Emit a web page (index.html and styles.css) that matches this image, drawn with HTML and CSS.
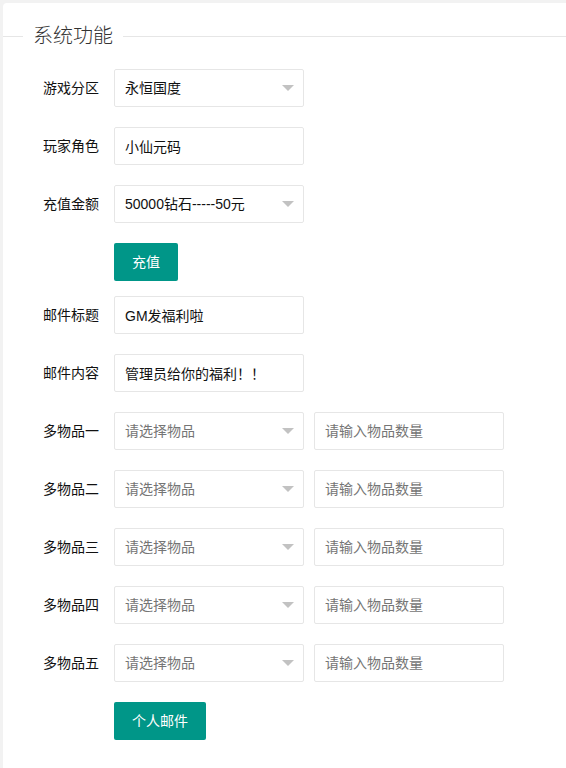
FILE: index.html
```html
<!DOCTYPE html>
<html lang="zh-CN">
<head>
<meta charset="utf-8">
<title>系统功能</title>
<link rel="stylesheet" href="styles.css">
</head>
<body>
<div class="card">
  <fieldset class="field-title">
    <legend>系统功能</legend>
  </fieldset>
  <form class="form">
    <div class="form-item">
      <label class="form-label">游戏分区</label>
      <div class="input-inline select">
        <div class="input">永恒国度</div>
        <i class="edge"></i>
      </div>
    </div>
    <div class="form-item">
      <label class="form-label">玩家角色</label>
      <div class="input-inline">
        <input class="input" type="text" value="小仙元码">
      </div>
    </div>
    <div class="form-item">
      <label class="form-label">充值金额</label>
      <div class="input-inline select">
        <div class="input">50000钻石-----50元</div>
        <i class="edge"></i>
      </div>
    </div>
    <div class="form-item btn-row">
      <div class="form-label"></div>
      <button type="button" class="btn">充值</button>
    </div>
    <div class="form-item">
      <label class="form-label">邮件标题</label>
      <div class="input-inline">
        <input class="input" type="text" value="GM发福利啦">
      </div>
    </div>
    <div class="form-item">
      <label class="form-label">邮件内容</label>
      <div class="input-inline">
        <input class="input" type="text" value="管理员给你的福利！！">
      </div>
    </div>
    <div class="form-item">
      <label class="form-label">多物品一</label>
      <div class="input-inline select">
        <div class="input placeholder">请选择物品</div>
        <i class="edge"></i>
      </div>
      <div class="input-inline">
        <input class="input" type="text" placeholder="请输入物品数量">
      </div>
    </div>
    <div class="form-item">
      <label class="form-label">多物品二</label>
      <div class="input-inline select">
        <div class="input placeholder">请选择物品</div>
        <i class="edge"></i>
      </div>
      <div class="input-inline">
        <input class="input" type="text" placeholder="请输入物品数量">
      </div>
    </div>
    <div class="form-item">
      <label class="form-label">多物品三</label>
      <div class="input-inline select">
        <div class="input placeholder">请选择物品</div>
        <i class="edge"></i>
      </div>
      <div class="input-inline">
        <input class="input" type="text" placeholder="请输入物品数量">
      </div>
    </div>
    <div class="form-item">
      <label class="form-label">多物品四</label>
      <div class="input-inline select">
        <div class="input placeholder">请选择物品</div>
        <i class="edge"></i>
      </div>
      <div class="input-inline">
        <input class="input" type="text" placeholder="请输入物品数量">
      </div>
    </div>
    <div class="form-item">
      <label class="form-label">多物品五</label>
      <div class="input-inline select">
        <div class="input placeholder">请选择物品</div>
        <i class="edge"></i>
      </div>
      <div class="input-inline">
        <input class="input" type="text" placeholder="请输入物品数量">
      </div>
    </div>
    <div class="form-item btn-row">
      <div class="form-label"></div>
      <button type="button" class="btn">个人邮件</button>
    </div>
  </form>
</div>
</body>
</html>
```

FILE: styles.css
```css
html, body {
  margin: 0;
  padding: 0;
  height: 100%;
  overflow: hidden;
}
body {
  background: #f2f2f2;
  font-family: "Liberation Sans", "Noto Sans CJK SC", sans-serif;
  font-size: 14px;
  line-height: 24px;
  color: #333;
  padding: 3px 0 0 3px;
  box-sizing: border-box;
}
.card {
  background: #fff;
  border-radius: 4px 0 0 0;
  height: 100%;
  box-sizing: border-box;
  padding-top: 21px;
  overflow: hidden;
}
.field-title {
  margin: 0;
  padding: 0;
  border: 0;
  border-top: 1px solid #e6e6e6;
  min-width: 0;
}
.field-title legend {
  margin-left: 20px;
  padding: 0 10px;
  font-size: 20px;
  font-weight: 300;
  line-height: 24px;
  color: #333;
}
.form {
  margin: 21px 0 0 1px;
}
.form-item {
  display: flex;
  align-items: flex-start;
  margin-bottom: 20px;
}
.form-item.btn-row {
  margin-bottom: 15px;
}
.form-label {
  width: 80px;
  padding: 9px 15px;
  line-height: 20px;
  text-align: right;
  color: #111;
  flex: none;
}
.input-inline {
  position: relative;
  width: 190px;
  margin-right: 10px;
  flex: none;
}
.input {
  display: block;
  box-sizing: border-box;
  width: 100%;
  height: 38px;
  line-height: 36px;
  padding: 0 10px;
  border: 1px solid #e6e6e6;
  border-radius: 2px;
  background: #fff;
  color: #111;
  font-family: "Liberation Sans", "Noto Sans CJK SC", sans-serif;
  font-size: 14px;
  outline: none;
  margin: 0;
}
.select .input {
  padding-right: 30px;
  cursor: pointer;
}
.input.placeholder {
  color: #757575;
}
.input::placeholder {
  color: #757575;
}
.edge {
  position: absolute;
  right: 10px;
  top: 50%;
  margin-top: -3px;
  width: 0;
  height: 0;
  border-style: solid;
  border-width: 6px;
  border-color: #c2c2c2 transparent transparent transparent;
}
.btn {
  height: 38px;
  line-height: 38px;
  padding: 0 18px;
  border: 0;
  border-radius: 2px;
  background: #009688;
  color: #fff;
  font-family: "Liberation Sans", "Noto Sans CJK SC", sans-serif;
  font-size: 14px;
  cursor: pointer;
}
```
